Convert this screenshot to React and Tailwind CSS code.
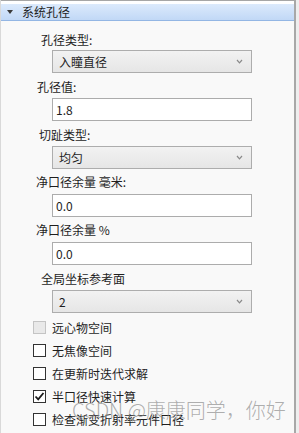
import React from 'react';

const font = { fontFamily: '"Noto Sans CJK SC", "Liberation Sans", sans-serif' };

function Label({ children, pl }) {
  return <div className={`h-4 text-[12px] leading-4 text-[#1e1e1e] ${pl}`}>{children}</div>;
}

function Select({ value }) {
  return (
    <div className="ml-[51px] flex h-[23px] w-[200px] items-center justify-between border border-[#adadad] bg-gradient-to-b from-[#f2f2f2] to-[#e6e6e6] pl-[6px] pr-[8px]">
      <span className="text-[12px] leading-4 text-[#1e1e1e]">{value}</span>
      <svg width="7" height="5" viewBox="0 0 7 5">
        <path d="M1 1 L3.5 3.8 L6 1" fill="none" stroke="#8a8a8a" strokeWidth="1.2" />
      </svg>
    </div>
  );
}

function Input({ value }) {
  return (
    <div className="ml-[51px] flex h-[23px] w-[200px] items-center border border-[#acacac] bg-white pl-[3px]">
      <span className="text-[12px] leading-4 text-[#1e1e1e]">{value}</span>
    </div>
  );
}

function Check({ label, checked, disabled }) {
  return (
    <div className="flex h-[23px] items-center pl-[32px]">
      <div
        className={`flex h-[13px] w-[13px] items-center justify-center border ${
          disabled ? 'border-[#c4c4c4] bg-[#e9e9e9]' : 'border-[#333333] bg-white'
        }`}
      >
        {checked && (
          <svg width="11" height="11" viewBox="0 0 11 11">
            <path d="M1.5 5.5 L4.2 8.3 L9.5 2" fill="none" stroke="#1a1a1a" strokeWidth="1.8" />
          </svg>
        )}
      </div>
      <span className="ml-[6px] text-[12px] leading-4 text-[#1e1e1e]">{label}</span>
    </div>
  );
}

export default function App() {
  return (
    <div className="relative flex h-[433px] w-[299px] overflow-hidden bg-white" style={font}>
      <div className="flex w-[296px] flex-col border-l border-r-2 border-[#d9d9d9] border-r-[#a8a8a8] bg-[#f9f9f9]">
        <div className="h-px bg-[#a6a6a6]" />
        <div className="h-[3px] bg-white" />
        {/* section header */}
        <div className="flex h-[17px] items-center border-b border-[#93b6e4] bg-gradient-to-b from-[#dceafc] to-[#c1d8f6] pl-[5px]">
          <svg width="8" height="6" viewBox="0 0 8 6">
            <path d="M1 1 L7 1 L4 5 Z" fill="#3a3a3a" />
          </svg>
          <span className="ml-[8px] text-[12px] leading-4 text-[#1e1e1e]">系统孔径</span>
        </div>

        <div className="mt-[11px]"><Label pl="pl-[40px]">孔径类型:</Label></div>
        <div className="mt-[2px]"><Select value="入瞳直径" /></div>

        <div className="mt-[6px]"><Label pl="pl-[36px]">孔径值:</Label></div>
        <div className="mt-[3px]"><Input value="1.8" /></div>

        <div className="mt-[6px]"><Label pl="pl-[38px]">切趾类型:</Label></div>
        <div className="mt-[3px]"><Select value="均匀" /></div>

        <div className="mt-[5px]"><Label pl="pl-[35px]">净口径余量 毫米:</Label></div>
        <div className="mt-[4px]"><Input value="0.0" /></div>

        <div className="mt-[5px]"><Label pl="pl-[35px]">净口径余量 %</Label></div>
        <div className="mt-[4px]"><Input value="0.0" /></div>

        <div className="mt-[6px]"><Label pl="pl-[40px]">全局坐标参考面</Label></div>
        <div className="mt-[3px]"><Select value="2" /></div>

        <div className="mt-[3px]">
          <Check label="远心物空间" disabled />
          <Check label="无焦像空间" />
          <Check label="在更新时迭代求解" />
          <Check label="半口径快速计算" checked />
          <Check label="检查渐变折射率元件口径" />
        </div>
      </div>
      <div className="flex-1 bg-[#eeeeee]" />

      <div className="pointer-events-none absolute left-[72px] top-[396px] text-[20px] leading-7 font-light whitespace-nowrap text-[#8c8c8c]/70">
        CSDN @康康同学，你好
      </div>
    </div>
  );
}
